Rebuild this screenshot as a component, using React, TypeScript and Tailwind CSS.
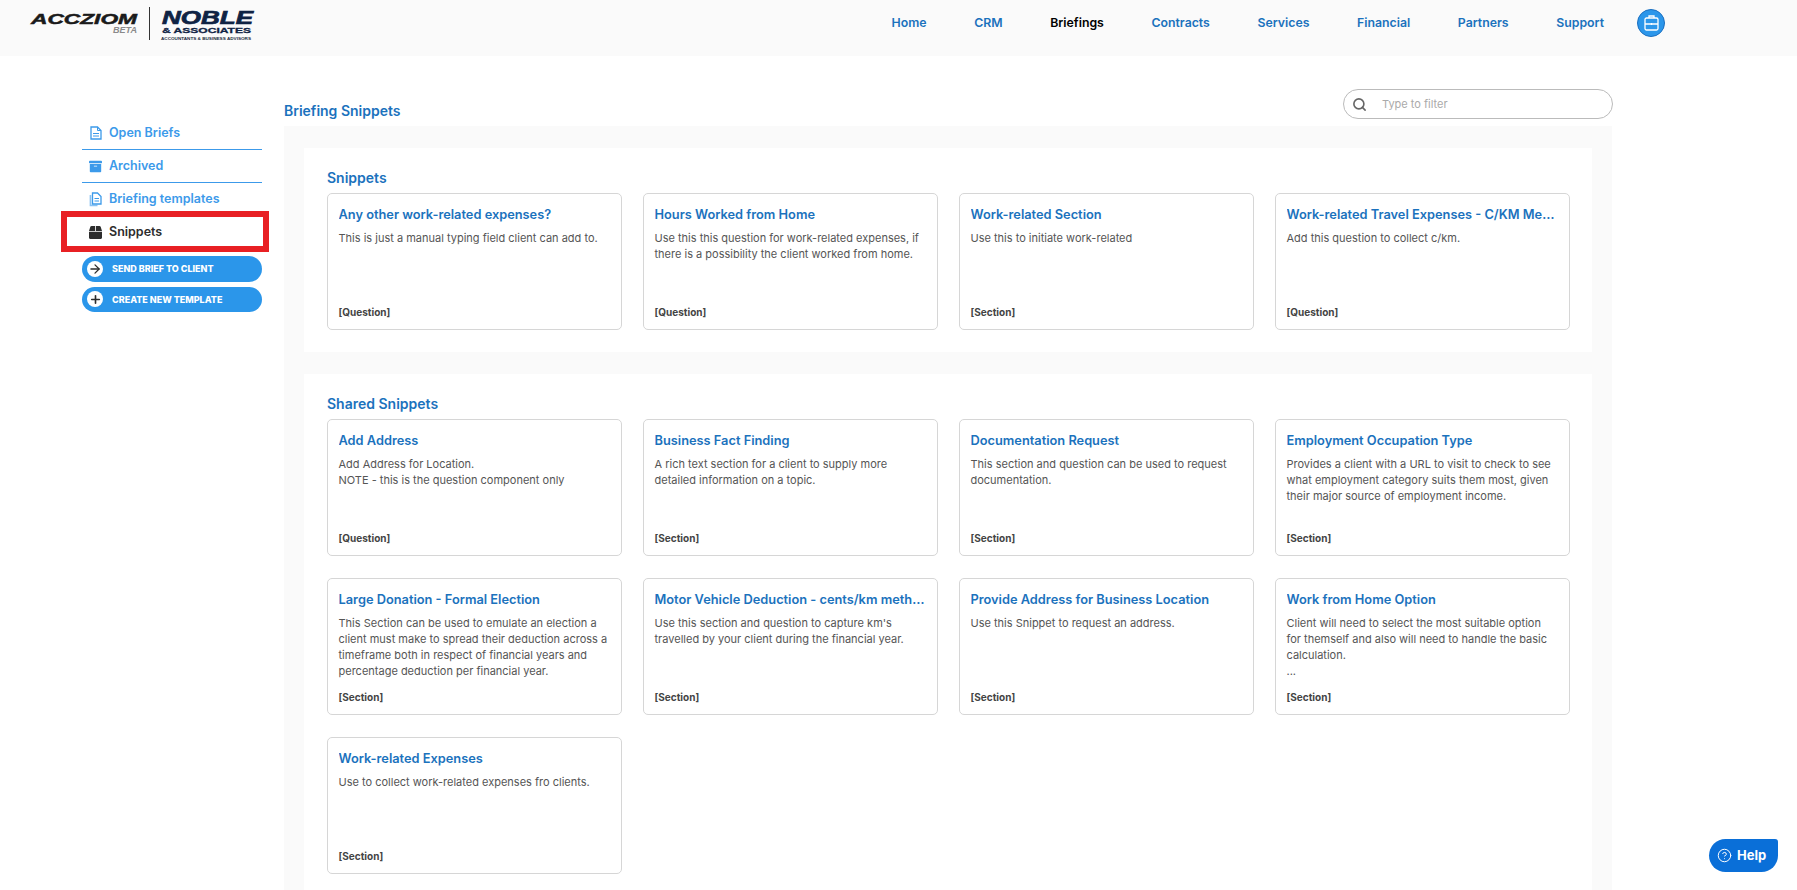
import { Search, Plus, ArrowRight, CircleHelp } from "lucide-react";
import { FaArchive, FaBox } from "react-icons/fa";

const navItems = ["Home", "CRM", "Briefings", "Contracts", "Services", "Financial", "Partners", "Support"];

type Snippet = { title: string; text: string[]; tag: string };

const mine: Snippet[] = [
  { title: "Any other work-related expenses?", text: ["This is just a manual typing field client can add to."], tag: "[Question]" },
  { title: "Hours Worked from Home", text: ["Use this this question for work-related expenses, if there is a possibility the client worked from home."], tag: "[Question]" },
  { title: "Work-related Section", text: ["Use this to initiate work-related"], tag: "[Section]" },
  { title: "Work-related Travel Expenses - C/KM Method", text: ["Add this question to collect c/km."], tag: "[Question]" },
];

const shared: Snippet[] = [
  { title: "Add Address", text: ["Add Address for Location.", "NOTE - this is the question component only"], tag: "[Question]" },
  { title: "Business Fact Finding", text: ["A rich text section for a client to supply more detailed information on a topic."], tag: "[Section]" },
  { title: "Documentation Request", text: ["This section and question can be used to request documentation."], tag: "[Section]" },
  { title: "Employment Occupation Type", text: ["Provides a client with a URL to visit to check to see what employment category suits them most, given their major source of employment income."], tag: "[Section]" },
  { title: "Large Donation - Formal Election", text: ["This Section can be used to emulate an election a client must make to spread their deduction across a timeframe both in respect of financial years and percentage deduction per financial year."], tag: "[Section]" },
  { title: "Motor Vehicle Deduction - cents/km method", text: ["Use this section and question to capture km's travelled by your client during the financial year."], tag: "[Section]" },
  { title: "Provide Address for Business Location", text: ["Use this Snippet to request an address."], tag: "[Section]" },
  { title: "Work from Home Option", text: ["Client will need to select the most suitable option for themself and also will need to handle the basic calculation.", "..."], tag: "[Section]" },
  { title: "Work-related Expenses", text: ["Use to collect work-related expenses fro clients."], tag: "[Section]" },
];

function Logo() {
  return (
    <svg width="270" height="48" viewBox="0 0 270 48" className="block">
      <text x="31" y="24" textLength="106" lengthAdjust="spacingAndGlyphs" fontFamily="Liberation Sans" fontWeight="700" fontStyle="italic" fontSize="15" fill="#1a1a1a" stroke="#1a1a1a" strokeWidth="0.5">ACCZIOM</text>
      <text x="113" y="33" textLength="24" lengthAdjust="spacingAndGlyphs" fontFamily="Liberation Sans" fontWeight="700" fontStyle="italic" fontSize="9" fill="#8a8a8a">BETA</text>
      <rect x="149" y="7" width="1" height="33" fill="#333" />
      <text x="162" y="24" textLength="91" lengthAdjust="spacingAndGlyphs" fontFamily="Liberation Sans" fontWeight="700" fontStyle="italic" fontSize="19" fill="#0f2344" stroke="#0f2344" strokeWidth="0.7">NOBLE</text>
      <text x="162" y="33" textLength="89" lengthAdjust="spacingAndGlyphs" fontFamily="Liberation Sans" fontWeight="700" fontSize="8" fill="#0f2344" stroke="#0f2344" strokeWidth="0.3">&amp; ASSOCIATES</text>
      <text x="161" y="39.5" textLength="90" lengthAdjust="spacingAndGlyphs" fontFamily="Liberation Sans" fontWeight="700" fontSize="4" fill="#1a2a40">ACCOUNTANTS &amp; BUSINESS ADVISORS</text>
    </svg>
  );
}

function CaseIcon() {
  return (
    <span className="flex h-7 w-7 items-center justify-center rounded-full border border-[#1b6fc0] bg-[#2b96ea]">
      <svg width="15" height="16" viewBox="0 0 15 16" fill="none" stroke="#fff" strokeWidth="1.3">
        <path d="M5 3V1h5v2" />
        <rect x="1" y="3" width="13" height="12" rx="1.5" />
        <path d="M1 9h13M7.5 8v2" />
      </svg>
    </span>
  );
}

function DocIcon() {
  return (
    <svg width="12" height="14" viewBox="0 0 12 14" fill="none" stroke="currentColor" strokeWidth="1.3">
      <path d="M1 1h6.5L11 4.5V13H1z" />
      <path d="M7.5 1v3.5H11M3 7.5h6M3 10h6" strokeWidth="1" />
    </svg>
  );
}

function TemplatesIcon() {
  return (
    <svg width="13" height="15" viewBox="0 0 13 15" fill="none" stroke="currentColor">
      <path d="M3.5 1H8.5L12 4.5V12H3.5z" strokeWidth="1.3" />
      <path d="M1.5 3v10.5h7" strokeWidth="1.7" opacity="0.6" />
      <path d="M5.5 6.5h4.5M5.5 9h4.5" strokeWidth="1" />
    </svg>
  );
}

function SideLink({ icon, label, active, line }: { icon: React.ReactNode; label: string; active?: boolean; line?: boolean }) {
  return (
    <div className={`relative flex h-[33px] items-center gap-[7px] pl-[7px] text-[12.5px] font-semibold ${active ? "text-[#2d2d2d]" : "text-[#3c9aea]"} ${line ? "border-b border-[#3c9aea]" : ""}`}>
      <span className="flex w-[13px] justify-center">{icon}</span>
      <span>{label}</span>
      {active && <span className="absolute -top-[5px] -bottom-[3px] -left-[21px] -right-[7px] border-[6px] border-[#e82024]" />}
    </div>
  );
}

function PillButton({ icon, label }: { icon: React.ReactNode; label: string }) {
  return (
    <button className="flex h-[25.5px] w-[180px] items-center gap-[9px] rounded-full bg-[#2b96ea] pl-[5px] text-[9px] font-extrabold text-white">
      <span className="flex h-4 w-4 items-center justify-center rounded-full bg-white text-[#2d2d2d]">{icon}</span>
      {label}
    </button>
  );
}

function Card({ item }: { item: Snippet }) {
  return (
    <div className="flex h-[137px] min-w-0 flex-col rounded-[5px] border border-[#d6d6d6] bg-white pt-[11px] pr-[11.5px] pb-[10px] pl-[10.5px]">
      <div className="truncate text-[12.8px] leading-[20px] font-semibold text-[#1b72bd]">{item.title}</div>
      <div className="mt-[5px] flex-1 text-[11px] leading-[16px] text-[#555555]">
        {item.text.map((t) => (
          <p key={t}>{t}</p>
        ))}
      </div>
      <div className="text-[10px] leading-[14px] font-bold text-[#444444]">{item.tag}</div>
    </div>
  );
}

function Section({ title, items, className }: { title: string; items: Snippet[]; className: string }) {
  return (
    <section className={`bg-white pr-[21px] pl-[23px] ${className}`}>
      <h2 className="mb-[5px] text-[14px] leading-[20px] font-semibold text-[#1b72bd]">{title}</h2>
      <div className="grid grid-cols-[repeat(4,295px)] gap-x-[21px] gap-y-[22px]">
        {items.map((item) => (
          <Card key={item.title} item={item} />
        ))}
      </div>
    </section>
  );
}

export default function App() {
  return (
    <div className="relative h-[890px] overflow-hidden bg-white font-['Inter',sans-serif]">
      <header className="flex h-14 items-start justify-between bg-[#fafafa] pr-[132px]">
        <Logo />
        <nav className="flex items-center gap-[47.6px] pt-[9px] text-[12.3px] font-semibold text-[#1b72bd]">
          {navItems.map((item) => (
            <a key={item} className={item === "Briefings" ? "text-black" : ""}>
              {item}
            </a>
          ))}
          <span className="-ml-[14.6px]">
            <CaseIcon />
          </span>
        </nav>
      </header>

      <div className="flex pl-[82px]">
        <aside className="w-[180px] pt-[61px]">
          <SideLink icon={<DocIcon />} label="Open Briefs" line />
          <SideLink icon={<FaArchive size={13} />} label="Archived" line />
          <SideLink icon={<TemplatesIcon />} label="Briefing templates" />
          <SideLink icon={<FaBox size={13} />} label="Snippets" active />
          <div className="mt-[7px] flex flex-col gap-[5px]">
            <PillButton icon={<ArrowRight size={14} strokeWidth={2.2} />} label="SEND BRIEF TO CLIENT" />
            <PillButton icon={<Plus size={13} strokeWidth={3} />} label="CREATE NEW TEMPLATE" />
          </div>
        </aside>

        <main className="ml-[22px] w-[1328px]">
          <div className="flex h-[70px] items-end justify-between pb-[7px]">
            <h1 className="-mb-[2px] text-[14px] leading-[20px] font-semibold text-[#1b72bd]">Briefing Snippets</h1>
            <div className="-mr-[1px] flex h-[30px] w-[270px] items-center rounded-full border border-[#bbbbbb] bg-white pl-[8px]">
              <Search size={15} strokeWidth={2.6} className="text-[#666666]" />
              <span className="ml-[15px] text-[11px] text-[#aaaaaa]">Type to filter</span>
            </div>
          </div>
          <div className="flex h-[800px] flex-col gap-[22px] bg-[#fafafa] px-[20px] pt-[22px]">
            <Section title="Snippets" items={mine} className="pt-[20px] pb-[22px]" />
            <Section title="Shared Snippets" items={shared} className="flex-1 pt-[20px]" />
          </div>
        </main>
      </div>

      <button className="absolute top-[839px] left-[1709px] flex h-[33px] w-[69px] items-center gap-[5px] rounded-tl-[17px] rounded-tr-[3px] rounded-br-[17px] rounded-bl-[17px] bg-[#0a6fd8] pl-[8px] text-[13px] font-bold text-white">
        <CircleHelp size={15} strokeWidth={1.6} />
        Help
      </button>
    </div>
  );
}
